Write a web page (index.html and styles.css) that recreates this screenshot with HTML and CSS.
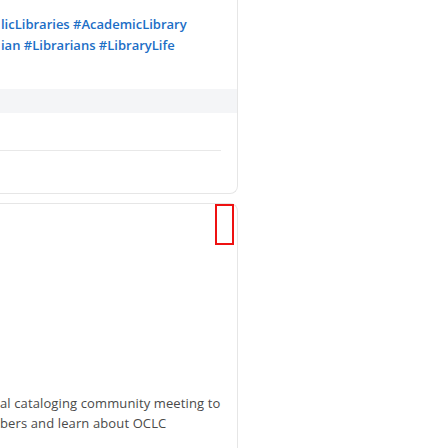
FILE: index.html
```html
<!DOCTYPE html>
<html lang="en">
<head>
<meta charset="utf-8">
<title>Feed</title>
<link rel="stylesheet" href="styles.css">
</head>
<body>
<div class="column">
  <article class="card card-top">
    <p class="tags">licLibraries #AcademicLibrary<br>ian #Librarians #LibraryLife</p>
    <div class="bar"></div>
    <div class="sep"></div>
  </article>
  <article class="card card-next">
    <span class="focus"></span>
    <p class="body-text">al cataloging community meeting to<br>bers and learn about OCLC</p>
  </article>
</div>
</body>
</html>
```
FILE: styles.css
```css
html, body {
  margin: 0;
  padding: 0;
  background: #ffffff;
}
body {
  font-family: "Open Sans", "Noto Sans", sans-serif;
  height: 448px;
  overflow: hidden;
}
.column {
  width: 238px;
  display: flex;
  flex-direction: column;
  gap: 9px;
}
.card {
  box-sizing: border-box;
  border-right: 1px solid #e6e6e6;
  background: #ffffff;
}
.card-top {
  border-bottom: 1px solid #e6e6e6;
  border-bottom-right-radius: 8px;
  height: 194px;
  padding-top: 14px;
  display: flex;
  flex-direction: column;
}
.tags {
  margin: 0;
  font-size: 13px;
  line-height: 21px;
  font-weight: 600;
  color: #1c6ec6;
  padding-left: 1px;
}
.bar {
  margin-top: 33px;
  height: 24px;
  background: #f4f5f7;
}
.sep {
  margin-top: 37px;
  margin-right: 16px;
  height: 1px;
  background: #e8e8e8;
}
.card-next {
  position: relative;
  border-top: 1px solid #e6e6e6;
  border-top-right-radius: 8px;
  height: 260px;
  padding-top: 189px;
}
.focus {
  position: absolute;
  top: 0;
  right: 3px;
  width: 19px;
  height: 41px;
  box-sizing: border-box;
  border: 2px solid #ee1111;
}
.body-text {
  margin: 0;
  font-size: 13px;
  font-weight: 400;
  letter-spacing: 0.12px;
  line-height: 20px;
  color: #4a4a4a;
}
```
